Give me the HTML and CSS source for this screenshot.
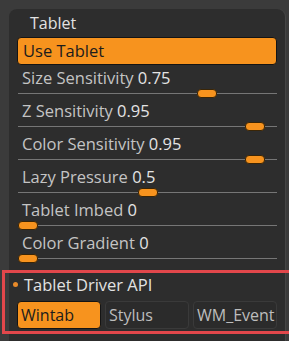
FILE: index.html
```html
<!DOCTYPE html>
<html lang="en">
<head>
    <meta charset="UTF-8">
    <title>Tablet</title>
    <link rel="stylesheet" href="styles.css">
</head>
<body>

    <div class="panel">
        <div class="title">Tablet</div>
        <div class="toggle on">Use Tablet</div>

        <div class="slider">
            <div class="label">Size Sensitivity <span class="value">0.75</span></div>
            <div class="track"><div class="knob" style="left: 179px"></div></div>
        </div>
        <div class="slider">
            <div class="label">Z Sensitivity <span class="value">0.95</span></div>
            <div class="track"><div class="knob" style="left: 227px"></div></div>
        </div>
        <div class="slider">
            <div class="label">Color Sensitivity <span class="value">0.95</span></div>
            <div class="track"><div class="knob" style="left: 227px"></div></div>
        </div>
        <div class="slider">
            <div class="label">Lazy Pressure <span class="value">0.5</span></div>
            <div class="track"><div class="knob" style="left: 120px"></div></div>
        </div>
        <div class="slider">
            <div class="label">Tablet Imbed <span class="value">0</span></div>
            <div class="track"><div class="knob" style="left: 0px"></div></div>
        </div>
        <div class="slider">
            <div class="label">Color Gradient <span class="value">0</span></div>
            <div class="track"><div class="knob" style="left: 0px"></div></div>
        </div>

        <div class="driver">
            <div class="driver-title"><span class="dot"></span>Tablet Driver API</div>
            <div class="choices">
                <div class="choice on">Wintab</div>
                <div class="choice">Stylus</div>
                <div class="choice">WM_Event</div>
            </div>
        </div>
    </div>

    <div class="highlight"></div>

</body>
</html>
```

FILE: styles.css
```css
body {
    margin: 0;
    width: 289px;
    height: 341px;
    overflow: hidden;
    background-color: #3b3b3b;
    font-family: "Open Sans", "Noto Sans", sans-serif;
    color: #c4c4c4;
    position: relative;
}
.panel {
    margin: 9px 0 0 9px;
    width: 260px;
    height: 332px;
    padding: 0 8px;
    background-color: #2d2d2d;
    border-radius: 8px 8px 0 0;
    box-shadow: 1px 0 0 #454545;
}
.title {
    height: 28px;
    line-height: 28px;
    padding-left: 13px;
    font-size: 16px;
    color: #e2e2e2;
}
.toggle {
    height: 26px;
    line-height: 26px;
    padding-left: 5px;
    font-size: 16.5px;
    border: 1px solid #141414;
    border-radius: 4px;
}
.on {
    background-color: #f7931e;
    color: #1c1c1c;
}
.slider {
    height: 33px;
}
.label {
    height: 24px;
    line-height: 26px;
    padding-left: 5px;
    font-size: 16.5px;
    white-space: nowrap;
}
.value {
    color: #e4e4e4;
}
.track {
    position: relative;
    margin: 4px 0 0 1px;
    height: 1px;
    background-color: #767676;
}
.knob {
    position: absolute;
    top: -4px;
    width: 18px;
    height: 7px;
    background-color: #f7931e;
    border: 1px solid #3a2506;
    border-radius: 4px;
}
.driver-title {
    display: flex;
    align-items: center;
    gap: 6px;
    margin: 8px 0 0 -4px;
    height: 26px;
    font-size: 16.5px;
    color: #e2e2e2;
}
.dot {
    width: 5px;
    height: 5px;
    border-radius: 50%;
    background-color: #e88a2a;
}
.choices {
    display: grid;
    grid-template-columns: 1fr 1fr 1fr;
    gap: 4px;
    margin-top: 4px;
}
.choice {
    height: 26px;
    line-height: 26px;
    padding-left: 3px;
    font-size: 16px;
    border: 1px solid #3a3a3a;
    border-radius: 4px;
    background-color: #2b2b2b;
    color: #bdbdbd;
    white-space: nowrap;
    overflow: hidden;
}
.choice.on {
    border-color: #141414;
    background-color: #f7931e;
    color: #1c1c1c;
}
.highlight {
    position: absolute;
    left: 2px;
    top: 270px;
    width: 284px;
    height: 58px;
    border: 3px solid #e2474b;
    border-right: none;
}
```
